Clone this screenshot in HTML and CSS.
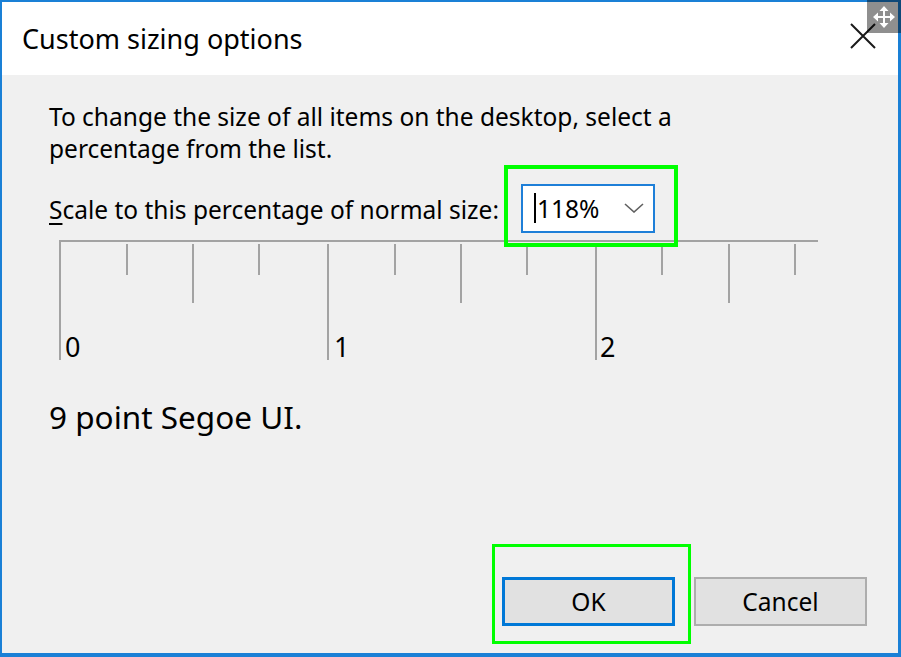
FILE: index.html
```html
<!DOCTYPE html>
<html>
<head>
<meta charset="utf-8">
<link rel="stylesheet" href="styles.css">
</head>
<body>
<div class="window">
  <div class="titlebar">
    <span class="title">Custom sizing options</span>
    <svg class="close" viewBox="0 0 26 26"><path d="M1 1L25 25M25 1L1 25" stroke="#1a1a1a" stroke-width="2"/></svg>
  </div>
  <div class="content">
    <p class="intro">To change the size of all items on the desktop, select a<br>percentage from the list.</p>
    <div class="scale-row">
      <span class="scale-label"><u>S</u>cale to this percentage of normal size:</span>
      <div class="combo-wrap">
        <div class="combo">
          <span class="caret"></span>
          <span class="value">118%</span>
          <svg class="chev" viewBox="0 0 20 10"><path d="M1 1l9 8 9-8" stroke="#606060" stroke-width="1.6" fill="none"/></svg>
        </div>
        <span class="hl hl-combo"></span>
      </div>
    </div>
    <svg class="ruler" width="800" height="140" viewBox="49 232 800 140">
      <g stroke="#a3a3a3" stroke-width="2">
        <line x1="59" y1="241" x2="818" y2="241"/>
        <line x1="60" y1="240" x2="60" y2="360"/>
        <line x1="127" y1="244" x2="127" y2="275"/>
        <line x1="193" y1="244" x2="193" y2="303"/>
        <line x1="259" y1="244" x2="259" y2="275"/>
        <line x1="328" y1="244" x2="328" y2="360"/>
        <line x1="395" y1="244" x2="395" y2="275"/>
        <line x1="461" y1="244" x2="461" y2="303"/>
        <line x1="527" y1="244" x2="527" y2="275"/>
        <line x1="596" y1="244" x2="596" y2="360"/>
        <line x1="662" y1="244" x2="662" y2="275"/>
        <line x1="729" y1="244" x2="729" y2="303"/>
        <line x1="795" y1="244" x2="795" y2="275"/>
      </g>
      <text class="rlabel" x="65" y="357">0</text>
      <text class="rlabel" x="334" y="357">1</text>
      <text class="rlabel" x="600" y="357">2</text>
    </svg>
    <p class="sample">9 point Segoe UI.</p>
    <div class="buttons">
      <div class="ok-wrap">
        <button class="btn btn-default">OK</button>
        <span class="hl hl-ok"></span>
      </div>
      <button class="btn">Cancel</button>
    </div>
  </div>
  <div class="move">
    <svg viewBox="0 0 22 22" width="22" height="22">
      <path d="M11 3v16M3 11h16" stroke="#fff" stroke-width="2"/>
      <path d="M11 0l-4.5 5h9zM11 22l-4.5-5h9zM0 11l5-4.5v9zM22 11l-5-4.5v9z" fill="#fff"/>
    </svg>
  </div>
</div>
</body>
</html>
```
FILE: styles.css
```css
* { box-sizing: border-box; }
html, body { margin: 0; padding: 0; }
body {
  width: 901px;
  height: 657px;
  overflow: hidden;
  font-family: "Noto Sans", "Open Sans", sans-serif;
  color: #000;
  background: #f0f0f0;
}
.window {
  position: relative;
  width: 901px;
  height: 657px;
  border-style: solid;
  border-color: #1a80d6;
  border-width: 2px 3px 4px 2px;
  display: flex;
  flex-direction: column;
  background: #f0f0f0;
}
.titlebar {
  flex: none;
  height: 73px;
  background: #fff;
  display: flex;
  align-items: flex-start;
  padding-left: 20px;
}
.title {
  font-size: 27px;
  line-height: 36px;
  margin-top: 19px;
}
.close {
  margin-left: auto;
  margin-right: 22px;
  margin-top: 21px;
  width: 26px;
  height: 26px;
}
.content {
  flex: 1;
  display: flex;
  flex-direction: column;
  padding: 26px 31px 27px 47px;
}
.intro {
  margin: 0;
  font-size: 24.5px;
  line-height: 32px;
}
.scale-row {
  display: flex;
  align-items: center;
  height: 48px;
  margin-top: 19px;
}
.scale-label {
  font-size: 24.5px;
  line-height: 32px;
  padding-top: 3px;
}
.scale-label u {
  text-decoration-thickness: 2px;
  text-underline-offset: 4px;
}
.combo-wrap {
  position: relative;
  margin-left: 22px;
}
.combo {
  width: 134px;
  height: 49px;
  border: 2px solid #1e7fd8;
  background: #fff;
  display: flex;
  align-items: center;
  padding-left: 11px;
}
.caret {
  width: 2px;
  height: 30px;
  background: #000;
}
.value {
  font-size: 24.5px;
  line-height: 30px;
  margin-left: 1px;
  padding-top: 2px;
}
.chev {
  margin-left: auto;
  margin-right: 9px;
  width: 20px;
  height: 10px;
}
.hl {
  position: absolute;
  border: 4px solid #00ff00;
  pointer-events: none;
}
.hl-combo {
  left: -17px;
  top: -19px;
  right: -23px;
  bottom: -14px;
}
.ruler {
  display: block;
  flex: none;
}
.rlabel {
  font-family: "Noto Sans", "Open Sans", sans-serif;
  font-size: 27px;
  fill: #000;
}
.sample {
  margin: 25px 0 0;
  font-size: 31.5px;
  line-height: 40px;
}
.buttons {
  margin-top: auto;
  display: flex;
  justify-content: flex-end;
  gap: 19px;
}
.ok-wrap {
  position: relative;
  display: flex;
}
.btn {
  width: 173px;
  height: 49px;
  padding: 0;
  background: #e1e1e1;
  border: 2px solid #adadad;
  font-family: "Noto Sans", "Open Sans", sans-serif;
  font-size: 24.5px;
  color: #000;
}
.btn-default {
  border: 3px solid #0078d7;
}
.hl-ok {
  left: -10px;
  top: -33px;
  right: -16px;
  bottom: -18px;
  border-width: 3px;
}
.move {
  position: absolute;
  top: -2px;
  right: -3px;
  width: 34px;
  height: 33px;
  background: rgba(0, 0, 0, 0.44);
  display: flex;
  align-items: center;
  justify-content: center;
}
.move svg {
  display: block;
}
```
